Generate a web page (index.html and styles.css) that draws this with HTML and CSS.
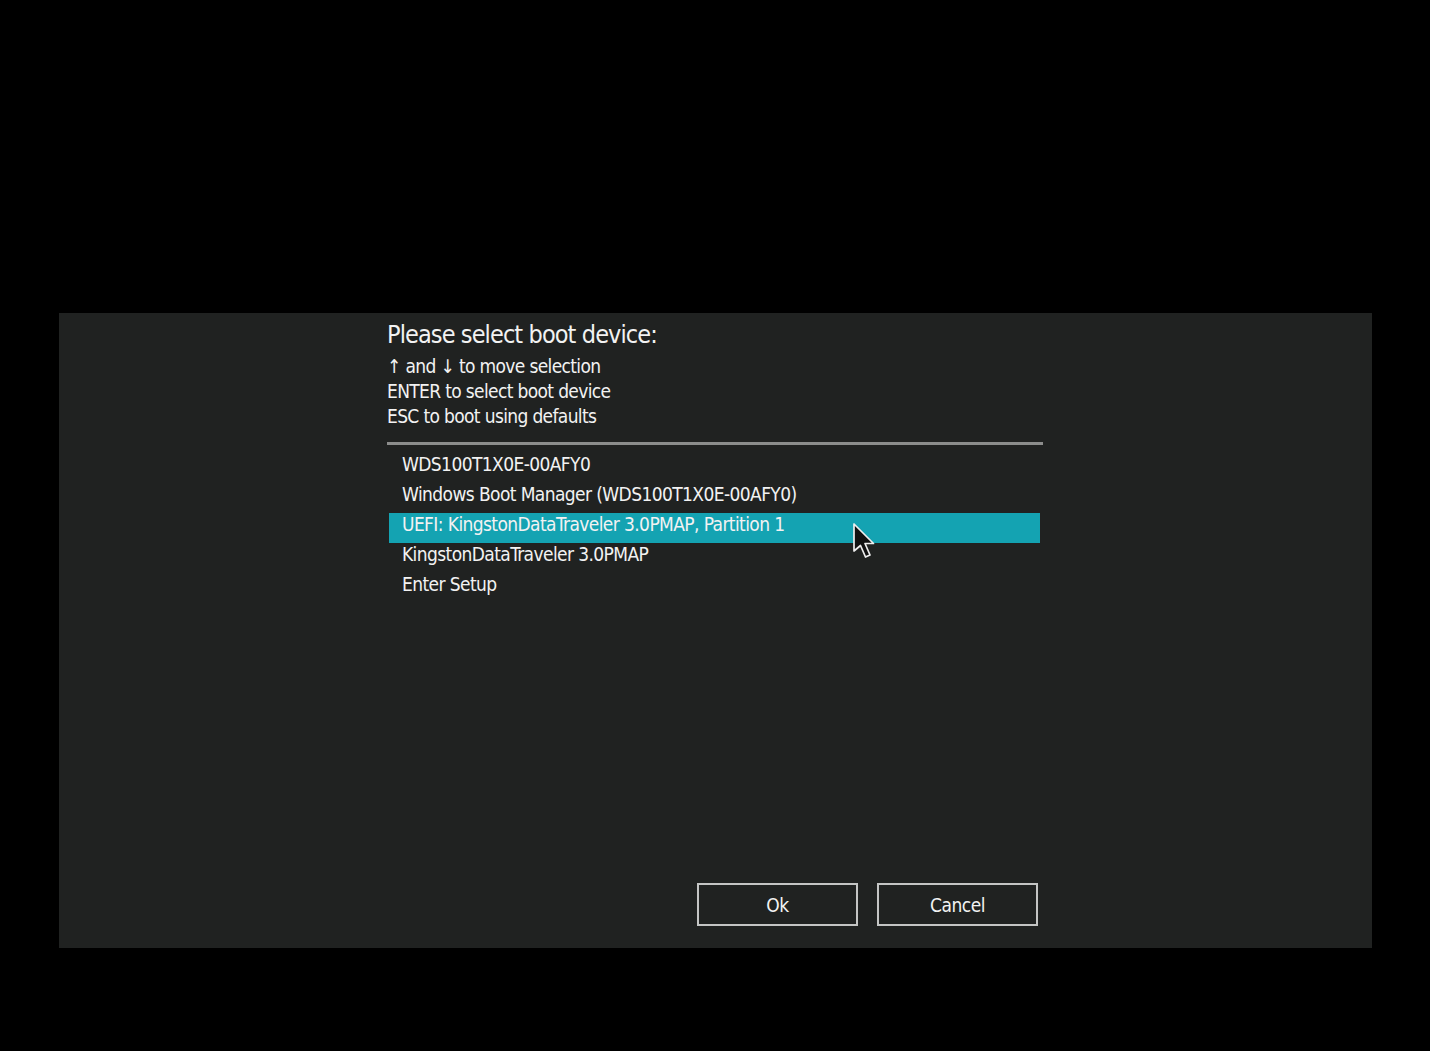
FILE: index.html
```html
<!DOCTYPE html>
<html lang="en">
<head>
    <meta charset="UTF-8">
    <title>Boot Menu</title>
    <link rel="stylesheet" href="styles.css">
</head>
<body>

    <div class="panel">
        <div class="content">
            <h1 class="title">Please select boot device:</h1>
            <div class="hints">
                <div>↑ and ↓ to move selection</div>
                <div>ENTER to select boot device</div>
                <div>ESC to boot using defaults</div>
            </div>

            <div class="divider"></div>

            <!-- Boot devices -->
            <ul class="devices">
                <li>WDS100T1X0E-00AFY0</li>
                <li>Windows Boot Manager (WDS100T1X0E-00AFY0)</li>
                <li class="selected">UEFI: KingstonDataTraveler 3.0PMAP, Partition 1
                    <svg class="pointer" width="26" height="40" viewBox="0 0 26 40">
                        <path d="M2 2 L2 29 L8.5 23.5 L13.5 35 L18 33 L13 21.5 L21.5 21.5 Z" fill="#111" stroke="#eee" stroke-width="1.7" stroke-linejoin="round"/>
                    </svg>
                </li>
                <li>KingstonDataTraveler 3.0PMAP</li>
                <li>Enter Setup</li>
            </ul>

            <div class="actions">
                <button class="btn">Ok</button>
                <button class="btn">Cancel</button>
            </div>
        </div>
    </div>

</body>
</html>
```

FILE: styles.css
```css
body {
    margin: 0;
    padding: 0;
    background: #000;
    font-family: "DejaVu Sans Condensed", "DejaVu Sans", sans-serif;
    color: #f2f2f2;
    height: 1051px;
    overflow: hidden;
}

/* Main panel */
.panel {
    margin: 313px 0 0 59px;
    width: 1313px;
    height: 635px;
    background: #202221;
    display: flex;
}

.content {
    margin-left: 328px;
    width: 656px;
    display: flex;
    flex-direction: column;
}

.title {
    margin: 7px 0 0;
    font-size: 25px;
    font-weight: normal;
    line-height: 30px;
    letter-spacing: -0.9px;
}

.hints {
    margin-top: 4px;
    font-size: 19px;
    line-height: 25px;
    letter-spacing: -0.65px;
}

.divider {
    margin-top: 13px;
    height: 3px;
    background: #8c8d8c;
}

/* Device list */
.devices {
    list-style: none;
    margin: 8px 0 0;
    padding: 0;
    font-size: 19px;
    letter-spacing: -0.6px;
}

.devices li {
    position: relative;
    height: 30px;
    line-height: 22px;
    margin: 0 3px 0 2px;
    padding-left: 13px;
}

.devices li.selected {
    background: #14a3b2;
}

.pointer {
    position: absolute;
    left: 463px;
    top: 9px;
}

/* Buttons */
.actions {
    margin-top: auto;
    margin-bottom: 22px;
    display: flex;
    justify-content: flex-end;
    gap: 19px;
    padding-right: 5px;
}

.btn {
    width: 161px;
    height: 43px;
    background: transparent;
    border: 2px solid #c4c5c4;
    color: #f2f2f2;
    font-family: inherit;
    font-size: 19px;
    letter-spacing: -0.5px;
}
```
